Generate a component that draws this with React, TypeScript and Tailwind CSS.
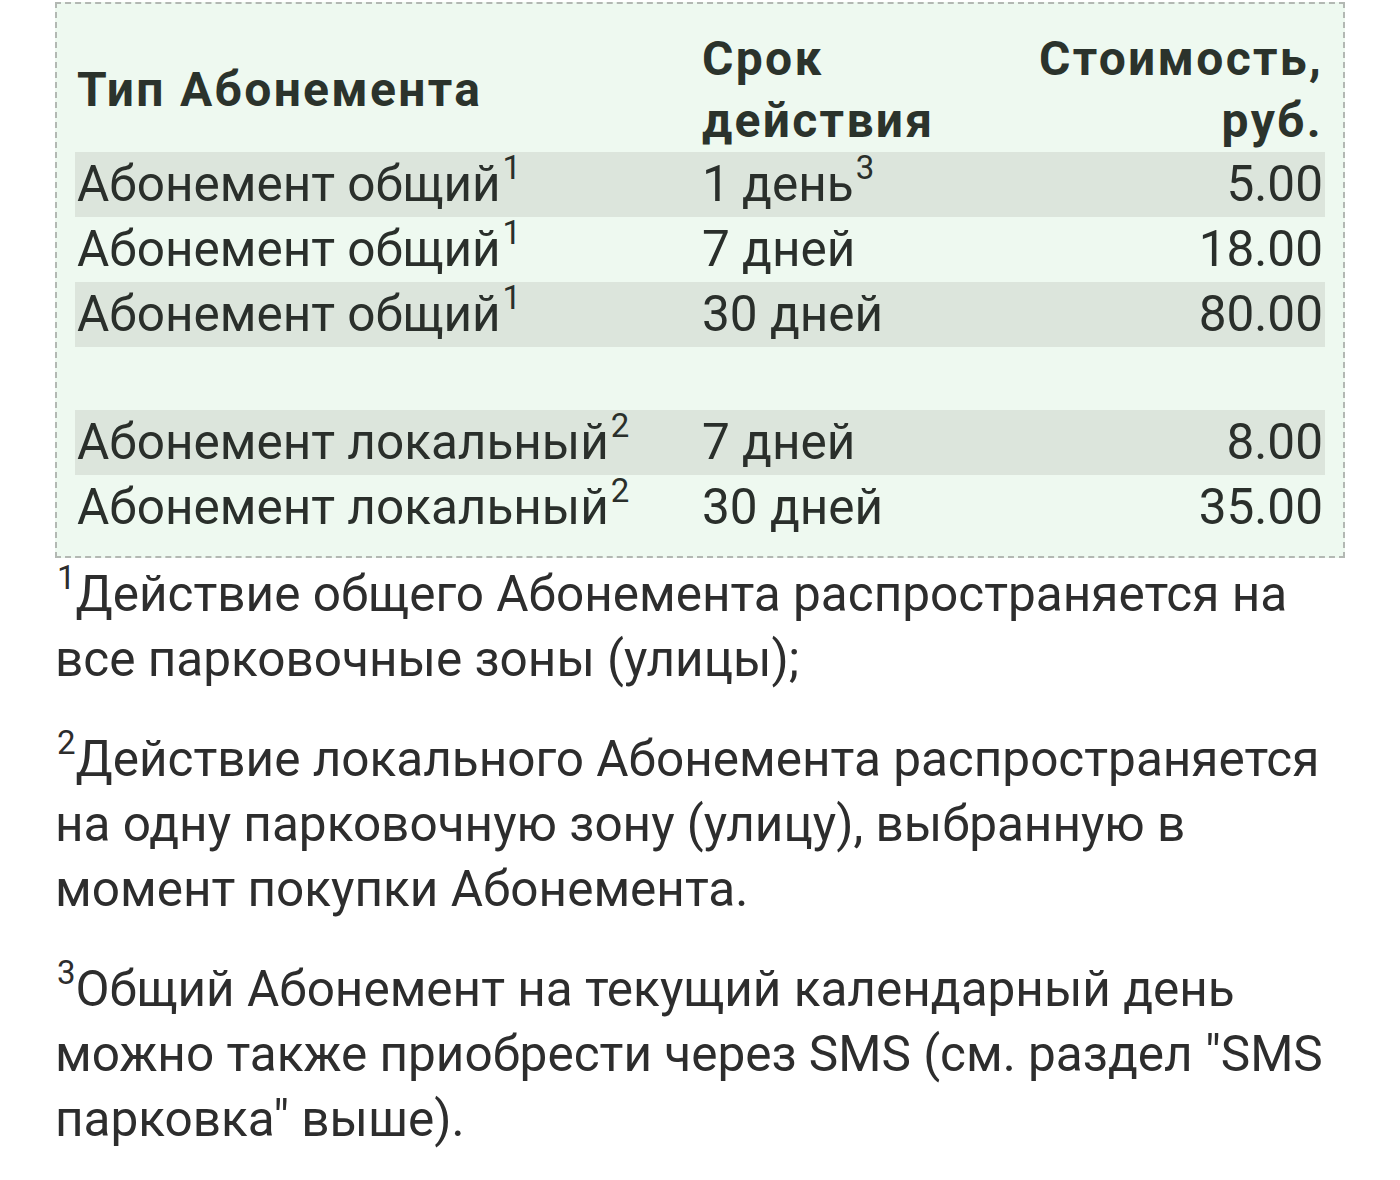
const rows = [
  { type: "Абонемент общий", note: "1", term: "1 день", termNote: "3", price: "5.00", band: true },
  { type: "Абонемент общий", note: "1", term: "7 дней", price: "18.00", band: false },
  { type: "Абонемент общий", note: "1", term: "30 дней", price: "80.00", band: true },
  null,
  { type: "Абонемент локальный", note: "2", term: "7 дней", price: "8.00", band: true },
  { type: "Абонемент локальный", note: "2", term: "30 дней", price: "35.00", band: false },
];

function Sup({ children }: { children: React.ReactNode }) {
  return <sup className="relative -top-[5px] ml-[2px] align-super text-[33px] leading-none">{children}</sup>;
}

export default function App() {
  return (
    <div className="min-h-[1180px] w-[1400px] bg-white font-['Roboto',_'Liberation_Sans',_sans-serif] text-[#2a2f2b]">
      <div className="px-[55px] pt-[2px]">
        {/* Tariff table */}
        <div className="border-2 border-dashed border-[#b3b8b3] bg-[#eef9f0] px-[18px] pt-[24px] pb-[16px]">
          <table className="w-full border-collapse text-[49.5px] leading-[65px]">
            <thead>
              <tr className="text-[48px] font-bold leading-[62px] tracking-[2.3px] text-[#2b332c]">
                <th className="w-[625px] px-[2px] text-left align-middle">Тип Абонемента</th>
                <th className="w-[300px] px-[2px] text-left">
                  Срок
                  <br />
                  действия
                </th>
                <th className="px-[2px] text-right">
                  Стоимость,
                  <br />
                  руб.
                </th>
              </tr>
            </thead>
            <tbody>
              {rows.map((r, i) =>
                r ? (
                  <tr key={i} className={r.band ? "bg-[#dce5dc]" : ""}>
                    <td className="px-[2px] whitespace-nowrap">
                      {r.type}
                      <Sup>{r.note}</Sup>
                    </td>
                    <td className="px-[2px] whitespace-nowrap">
                      {r.term}
                      {r.termNote && <Sup>{r.termNote}</Sup>}
                    </td>
                    <td className="px-[2px] text-right">{r.price}</td>
                  </tr>
                ) : (
                  <tr key={i}>
                    <td colSpan={3} className="h-[63px]"></td>
                  </tr>
                ),
              )}
            </tbody>
          </table>
        </div>

        {/* Footnotes */}
        <div className="pt-[4px] text-[49.5px] leading-[65px] text-[#2d2d2d]">
          <p>
            <Sup>1</Sup>Действие общего Абонемента распространяется на
            <br />
            все парковочные зоны (улицы);
          </p>
          <p className="mt-[35px]">
            <Sup>2</Sup>Действие локального Абонемента распространяется
            <br />
            на одну парковочную зону (улицу), выбранную в
            <br />
            момент покупки Абонемента.
          </p>
          <p className="mt-[35px]">
            <Sup>3</Sup>Общий Абонемент на текущий календарный день
            <br />
            можно также приобрести через SMS (см. раздел "SMS
            <br />
            парковка" выше).
          </p>
        </div>
      </div>
    </div>
  );
}
